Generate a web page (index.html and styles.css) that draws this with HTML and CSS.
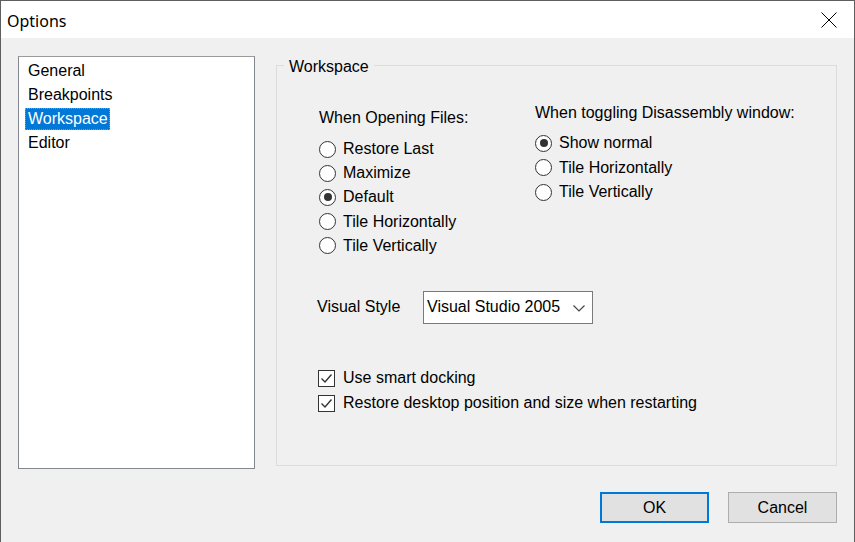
FILE: index.html
```html
<!DOCTYPE html>
<html>
<head>
<meta charset="utf-8">
<link rel="stylesheet" href="styles.css">
</head>
<body>
<div class="window">
  <div class="titlebar">
    <span class="title">Options</span>
    <span class="close">
      <svg width="16" height="16" viewBox="0 0 16 16"><path d="M0.5 0.5 L15.5 15.5 M15.5 0.5 L0.5 15.5" stroke="#000" stroke-width="1" fill="none"/></svg>
    </span>
  </div>
  <div class="content">
    <div class="main">
      <div class="listbox">
        <div class="item">General</div>
        <div class="item">Breakpoints</div>
        <div class="item"><span class="selected">Workspace</span></div>
        <div class="item">Editor</div>
      </div>
      <div class="group">
        <div class="legend">Workspace</div>
        <div class="columns">
          <div class="col col-left">
            <div class="heading">When Opening Files:</div>
            <div class="radio"><span class="circle"></span>Restore Last</div>
            <div class="radio"><span class="circle"></span>Maximize</div>
            <div class="radio"><span class="circle on"></span>Default</div>
            <div class="radio"><span class="circle"></span>Tile Horizontally</div>
            <div class="radio"><span class="circle"></span>Tile Vertically</div>
          </div>
          <div class="col col-right">
            <div class="heading">When toggling Disassembly window:</div>
            <div class="radio"><span class="circle on"></span>Show normal</div>
            <div class="radio"><span class="circle"></span>Tile Horizontally</div>
            <div class="radio"><span class="circle"></span>Tile Vertically</div>
          </div>
        </div>
        <div class="style-row">
          <span class="style-label">Visual Style</span>
          <div class="select">
            <span>Visual Studio 2005</span>
            <svg class="chev" width="12" height="7" viewBox="0 0 12 7"><path d="M0.5 0.5 L6 6 L11.5 0.5" stroke="#444" stroke-width="1.2" fill="none"/></svg>
          </div>
        </div>
        <div class="checks">
          <div class="check"><span class="box"><svg width="15" height="15" viewBox="0 0 15 15"><path d="M2.5 7.5 L6 11 L12.5 3.5" stroke="#333" stroke-width="1.4" fill="none"/></svg></span>Use smart docking</div>
          <div class="check"><span class="box"><svg width="15" height="15" viewBox="0 0 15 15"><path d="M2.5 7.5 L6 11 L12.5 3.5" stroke="#333" stroke-width="1.4" fill="none"/></svg></span>Restore desktop position and size when restarting</div>
        </div>
      </div>
    </div>
    <div class="buttons">
      <button class="btn btn-default">OK</button>
      <button class="btn">Cancel</button>
    </div>
  </div>
</div>
</body>
</html>
```

FILE: styles.css
```css
html, body {
  margin: 0;
  padding: 0;
  width: 855px;
  height: 542px;
  overflow: hidden;
}
body {
  font-family: "Liberation Sans", Arial, sans-serif;
  font-size: 16px;
  color: #000;
  background: #f0f0f0;
}
.window {
  box-sizing: border-box;
  width: 855px;
  height: 542px;
  border: 1px solid #5e5e5e;
  border-bottom: none;
  display: flex;
  flex-direction: column;
}
.titlebar {
  height: 37px;
  background: #fff;
  display: flex;
  align-items: center;
  justify-content: space-between;
  flex-shrink: 0;
}
.title {
  font-family: "Noto Sans", "Open Sans", sans-serif;
  font-size: 16px;
  margin-left: 6px;
  margin-top: 2px;
}
.close {
  width: 16px;
  height: 16px;
  margin-right: 17px;
  display: flex;
}
.content {
  flex: 1;
  background: #f0f0f0;
  padding: 18px 17px 0 17px;
  display: flex;
  flex-direction: column;
}
.main {
  display: flex;
  align-items: flex-start;
}
.listbox {
  box-sizing: border-box;
  width: 237px;
  height: 413px;
  background: #fff;
  border: 1px solid #828790;
  border-top-color: #9a9a9a;
  padding: 2px 0 0 9px;
  flex-shrink: 0;
}
.item {
  height: 24px;
  line-height: 24px;
}
.selected {
  display: inline-block;
  background: #0078d7;
  color: #fff;
  line-height: 21px;
  height: 22px;
  padding: 0 2px 0 3px;
  margin-left: -3px;
  outline: 1px dotted #d48a2a;
  outline-offset: -1px;
}
.group {
  box-sizing: border-box;
  margin-left: 21px;
  margin-top: 9px;
  width: 561px;
  height: 401px;
  border: 1px solid #dcdcdc;
  position: relative;
  padding: 42px 0 0 42px;
}
.legend {
  position: absolute;
  top: -8px;
  left: 7px;
  background: #f0f0f0;
  padding: 0 5px;
  line-height: 18px;
}
.columns {
  display: flex;
}
.col-left {
  width: 216px;
}
.col-right {
  margin-top: -5px;
}
.heading {
  line-height: 20px;
  margin-bottom: 8px;
}
.col-left .heading {
  margin-bottom: 9px;
}
.radio {
  display: flex;
  align-items: center;
  height: 24.2px;
}
.col-right .radio {
  height: 24.5px;
}
.circle {
  box-sizing: border-box;
  width: 17px;
  height: 17px;
  border: 1px solid #333;
  border-radius: 50%;
  background: #fff;
  margin-right: 7px;
  position: relative;
  flex-shrink: 0;
}
.circle.on::after {
  content: "";
  position: absolute;
  left: 3.5px;
  top: 3.5px;
  width: 8px;
  height: 8px;
  border-radius: 50%;
  background: #333;
}
.style-row {
  display: flex;
  align-items: center;
  margin-top: 33px;
  margin-left: -2px;
}
.style-label {
  width: 106px;
}
.select {
  box-sizing: border-box;
  width: 170px;
  height: 33px;
  background: #fff;
  border: 1px solid #7a7a7a;
  display: flex;
  align-items: center;
  justify-content: space-between;
  padding: 0 7px 0 3px;
}
.chev {
  margin-top: 2px;
}
.checks {
  margin-top: 42px;
  margin-left: -1px;
}
.check {
  display: flex;
  align-items: center;
  height: 25px;
}
.box {
  box-sizing: border-box;
  width: 17px;
  height: 17px;
  border: 1px solid #333;
  background: #fff;
  margin-right: 8px;
  display: flex;
  align-items: center;
  justify-content: center;
  flex-shrink: 0;
}
.buttons {
  display: flex;
  justify-content: flex-end;
  gap: 19px;
  margin-top: 23px;
}
.btn {
  box-sizing: border-box;
  width: 109px;
  height: 31px;
  background: #e1e1e1;
  border: 1px solid #adadad;
  font-family: "Liberation Sans", Arial, sans-serif;
  font-size: 16px;
  color: #000;
  padding: 0;
  margin: 0;
}
.btn-default {
  border: 2px solid #0078d7;
}
```
